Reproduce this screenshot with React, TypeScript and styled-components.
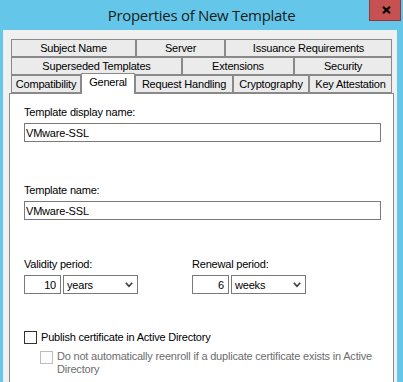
import React from "react";
import styled, { createGlobalStyle } from "styled-components";

const Global = createGlobalStyle`
  html, body { margin: 0; padding: 0; background: #64C7E9; }
  body { font-family: "Liberation Sans", Arial, sans-serif; }
  * { box-sizing: border-box; }
`;

const Window = styled.div`
  width: 403px;
  height: 382px;
  display: flex;
  flex-direction: column;
  background: #64c7e9;
  overflow: hidden;
`;

const TitleBar = styled.div`
  height: 30px;
  flex: none;
  display: grid;
  grid-template-columns: 1fr auto 1fr;
  align-items: start;
`;

const Title = styled.div`
  grid-column: 2;
  font-family: "Open Sans", "Noto Sans", sans-serif;
  font-size: 15px;
  letter-spacing: -0.3px;
  line-height: 30px;
  color: #1b1b1b;
  white-space: nowrap;
`;

const CloseButton = styled.div`
  grid-column: 3;
  justify-self: end;
  margin-right: 2px;
  width: 32px;
  height: 21px;
  background: #c75050;
  border: 1px solid #8a3a3a;
  border-top: none;
  display: flex;
  align-items: center;
  justify-content: center;
  padding-left: 3px;
`;

const Body = styled.div`
  flex: 1;
  margin: 0 6px 0 3px;
  background: #f0f0f0;
  padding: 9px 3px 0 6px;
  display: flex;
  flex-direction: column;
`;

const TabStrip = styled.div`
  margin: 0 2px;
  display: flex;
  flex-direction: column;
  font-size: 11px;
  letter-spacing: -0.2px;
  color: #000;
`;

const TabRow = styled.div`
  display: flex;
  height: 18px;
`;

const Tab = styled.div<{ $w: number; $active?: boolean }>`
  width: ${(p) => p.$w}px;
  flex: none;
  border: 1px solid #898989;
  background: ${(p) => (p.$active ? "#ffffff" : "#ebebeb")};
  text-align: center;
  line-height: 16px;
  white-space: nowrap;
  ${(p) =>
    p.$active &&
    `
    position: relative;
    z-index: 1;
    height: 21px;
    margin-top: -2px;
    border-bottom: none;
  `}
`;

const Panel = styled.div`
  flex: 1;
  background: #ffffff;
  border: 1px solid #898989;
  border-bottom: none;
  padding: 12px 12px 0 14px;
  display: flex;
  flex-direction: column;
  font-size: 11px;
  letter-spacing: -0.2px;
  color: #000;
`;

const Label = styled.div<{ $mt?: number }>`
  line-height: 13px;
  margin-top: ${(p) => p.$mt ?? 0}px;
  margin-bottom: 4px;
  white-space: nowrap;
`;

const TextBox = styled.div`
  width: 357px;
  height: 19px;
  border: 1px solid #7a7a7a;
  background: #fff;
  padding: 2px 0 0 1px;
  line-height: 15px;
  white-space: nowrap;
`;

const PeriodRow = styled.div<{ $mt: number }>`
  display: flex;
  margin-top: ${(p) => p.$mt}px;
`;

const PeriodGroup = styled.div<{ $w: number }>`
  width: ${(p) => p.$w}px;
  display: flex;
  flex-direction: column;
`;

const Controls = styled.div`
  display: flex;
  gap: 2px;
`;

const NumberBox = styled.div`
  width: 37px;
  height: 19px;
  border: 1px solid #7a7a7a;
  background: #fff;
  text-align: right;
  padding: 2px 4px 0 0;
  line-height: 15px;
`;

const Select = styled.div`
  width: 75px;
  height: 19px;
  border: 1px solid #7a7a7a;
  background: #fff;
  display: flex;
  align-items: center;
  justify-content: space-between;
  padding: 1px 4px 0 3px;
`;

const CheckRow = styled.div<{ $indent?: number; $mt?: number }>`
  display: flex;
  align-items: flex-start;
  gap: 4px;
  margin-left: ${(p) => p.$indent ?? 0}px;
  margin-top: ${(p) => p.$mt ?? 0}px;
`;

const Box = styled.span<{ $disabled?: boolean }>`
  flex: none;
  width: 13px;
  height: 13px;
  margin-top: ${(p) => (p.$disabled ? 1 : 0)}px;
  border: 1px solid ${(p) => (p.$disabled ? "#bcbcbc" : "#333333")};
  background: ${(p) => (p.$disabled ? "#fcfcfc" : "#ffffff")};
`;

const CheckText = styled.span<{ $disabled?: boolean }>`
  line-height: 13px;
  color: ${(p) => (p.$disabled ? "#6d6d6d" : "#000")};
  max-width: 325px;
`;

const Chevron = () => (
  <svg width="8" height="6" viewBox="0 0 8 6">
    <path d="M0.8 0.8 L4 4.4 L7.2 0.8" fill="none" stroke="#3c3c3c" strokeWidth="1.6" />
  </svg>
);

const CloseIcon = () => (
  <svg width="9" height="8" viewBox="0 0 9 8">
    <path d="M1 0.8 L8 7.2 M8 0.8 L1 7.2" stroke="#000" strokeWidth="2.2" />
  </svg>
);

const rows: { label: string; w: number; active?: boolean }[][] = [
  [
    { label: "Subject Name", w: 125 },
    { label: "Server", w: 89 },
    { label: "Issuance Requirements", w: 167 },
  ],
  [
    { label: "Superseded Templates", w: 171 },
    { label: "Extensions", w: 112 },
    { label: "Security", w: 98 },
  ],
  [
    { label: "Compatibility", w: 70 },
    { label: "General", w: 54, active: true },
    { label: "Request Handling", w: 98 },
    { label: "Cryptography", w: 76 },
    { label: "Key Attestation", w: 83 },
  ],
];

export default function App() {
  return (
    <>
      <Global />
      <Window>
        <TitleBar>
          <Title>Properties of New Template</Title>
          <CloseButton>
            <CloseIcon />
          </CloseButton>
        </TitleBar>
        <Body>
          <TabStrip>
            {rows.map((r, i) => (
              <TabRow key={i}>
                {r.map((t) => (
                  <Tab key={t.label} $w={t.w} $active={t.active}>
                    {t.label}
                  </Tab>
                ))}
              </TabRow>
            ))}
          </TabStrip>
          <Panel>
            <Label>Template display name:</Label>
            <TextBox>VMware-SSL</TextBox>
            <Label $mt={42}>Template name:</Label>
            <TextBox>VMware-SSL</TextBox>
            <PeriodRow $mt={38}>
              <PeriodGroup $w={168}>
                <Label>Validity period:</Label>
                <Controls>
                  <NumberBox>10</NumberBox>
                  <Select>
                    <span>years</span>
                    <Chevron />
                  </Select>
                </Controls>
              </PeriodGroup>
              <PeriodGroup $w={120}>
                <Label>Renewal period:</Label>
                <Controls>
                  <NumberBox>6</NumberBox>
                  <Select>
                    <span>weeks</span>
                    <Chevron />
                  </Select>
                </Controls>
              </PeriodGroup>
            </PeriodRow>
            <CheckRow $mt={37}>
              <Box />
              <CheckText>Publish certificate in Active Directory</CheckText>
            </CheckRow>
            <CheckRow $indent={16} $mt={6}>
              <Box $disabled />
              <CheckText $disabled>
                Do not automatically reenroll if a duplicate certificate exists in Active Directory
              </CheckText>
            </CheckRow>
          </Panel>
        </Body>
      </Window>
    </>
  );
}
